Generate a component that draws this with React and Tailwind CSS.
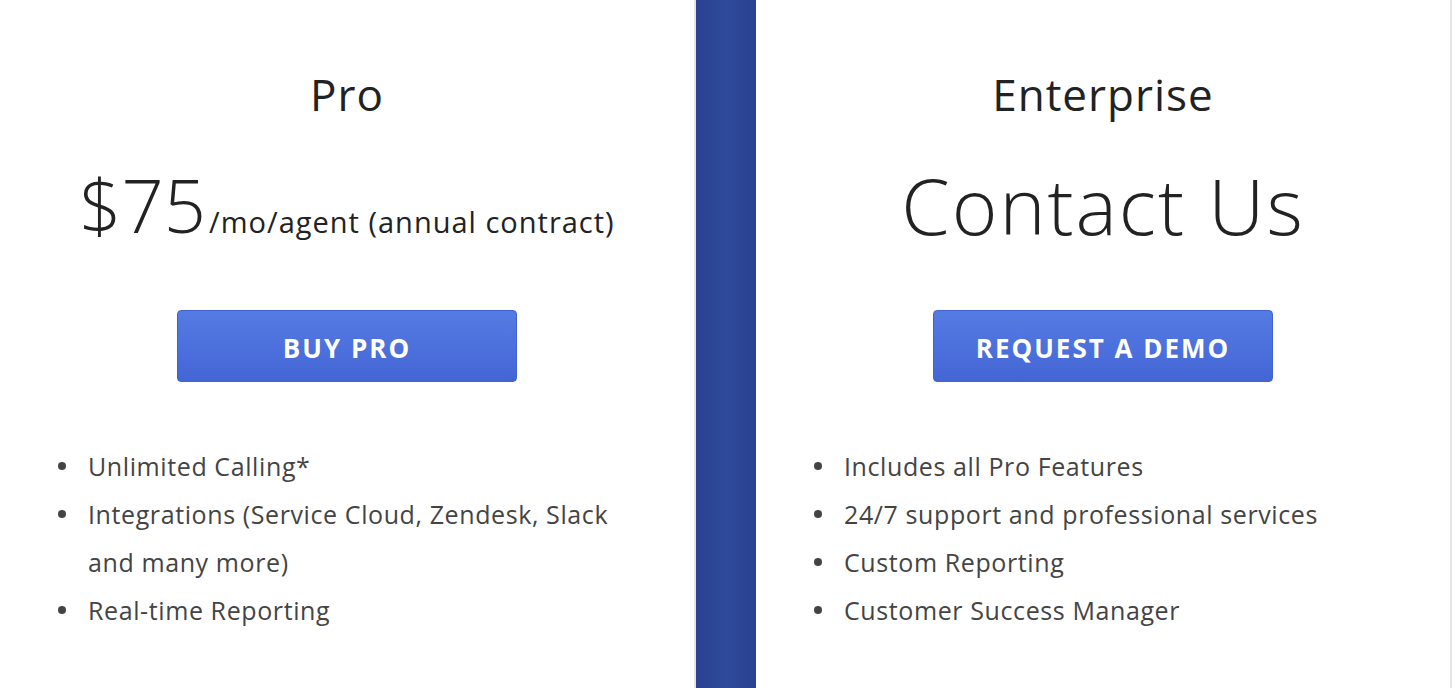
const plans = [
  {
    name: "Pro",
    cta: "BUY PRO",
    features: [
      "Unlimited Calling*",
      "Integrations (Service Cloud, Zendesk, Slack and many more)",
      "Real-time Reporting",
    ],
  },
  {
    name: "Enterprise",
    cta: "REQUEST A DEMO",
    features: [
      "Includes all Pro Features",
      "24/7 support and professional services",
      "Custom Reporting",
      "Customer Success Manager",
    ],
  },
];

const Card = ({ plan, children }) => (
  <div className="flex-1 h-full bg-white border-r-2 border-[#e4e4e4] flex flex-col items-center pt-[68px]">
    <h2 className="text-[44px] leading-[52px] text-[#222] font-normal tracking-[1px]">{plan.name}</h2>
    {children}
    <button className="mt-[60px] w-[340px] h-[72px] pt-[4px] rounded-[4px] border border-[#3f62cf] bg-gradient-to-b from-[#557be4] to-[#4466d5] text-white text-[26px] font-bold tracking-[2px]">
      {plan.cta}
    </button>
    <ul className="self-stretch mt-[60px] pl-[58px] pr-[60px] text-[25px] leading-[48px] text-[#444] tracking-[0.6px]">
      {plan.features.map((f) => (
        <li key={f} className="flex">
          <span className="mt-[20px] w-[8px] h-[8px] rounded-full bg-[#444] shrink-0 mr-[22px]" />
          <span>{f}</span>
        </li>
      ))}
    </ul>
  </div>
);

export default function App() {
  return (
    <div
      className="w-[1452px] h-[688px] flex bg-white overflow-hidden"
      style={{ fontFamily: "'Open Sans', Lato, sans-serif" }}
    >
      <Card plan={plans[0]}>
        <div className="mt-[40px] flex items-baseline text-[#222]">
          <span className="text-[74px] leading-[90px] font-light">$75</span>
          <span className="text-[29px] ml-[3px] tracking-[1px]">/mo/agent (annual contract)</span>
        </div>
      </Card>
      <div className="w-[60px] shrink-0 h-full bg-gradient-to-r from-[#2a4290] via-[#2e4a9a] to-[#2a4290]" />
      <Card plan={plans[1]}>
        <div className="mt-[40px] text-[78px] leading-[90px] font-light text-[#222] tracking-[2px]">Contact Us</div>
      </Card>
    </div>
  );
}
